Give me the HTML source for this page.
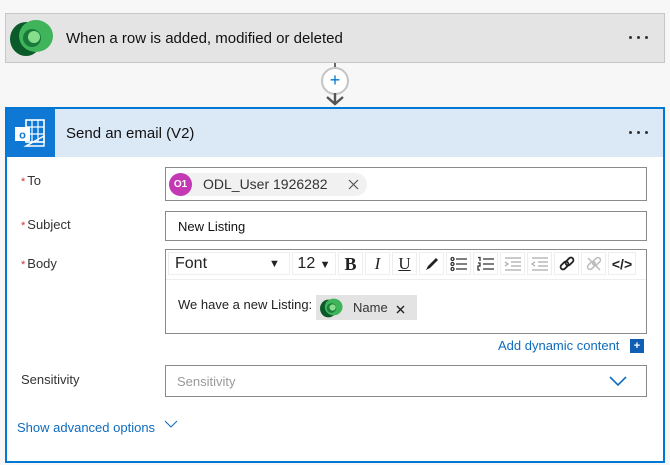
<!DOCTYPE html>
<html><head><style>
body{margin:0;width:670px;height:465px;background:#f7f7f7;font-family:"Liberation Sans",sans-serif;position:relative;overflow:hidden;color:#222}
.abs{position:absolute}
.lbl{position:absolute;left:21px;font-size:13px;color:#333}
.lbl b{color:#d13438;font-weight:normal;font-size:11px;margin-right:2px}
.inp{position:absolute;left:165px;width:482px;border:1px solid #8a8a8a;background:#fff;box-sizing:border-box}
.tb{position:absolute;top:2px;height:23px;background:#fff;border:1px solid #eee;box-sizing:border-box;font-size:14px;text-align:center;line-height:22px}
.dots{position:absolute;width:24px;height:4px}
.dots i{position:absolute;top:0;width:3px;height:3px;border-radius:50%;background:#333}
</style></head><body>
<div class="abs" style="left:5px;top:13px;width:660px;height:50px;background:#e4e4e4;border:1px solid #c6c6c6;box-sizing:border-box"></div>
<svg class="abs" style="left:6px;top:17px" width="48" height="42" viewBox="0 0 48 42">
<ellipse cx="20" cy="22" rx="16" ry="17" fill="#0b5a2a"/><ellipse cx="30" cy="19" rx="17" ry="16" fill="#3fb45a"/><circle cx="26" cy="21" r="9" fill="#1a7a3a"/><circle cx="28" cy="20" r="6" fill="#86de8c"/></svg>
<div class="abs" style="left:66px;top:30px;font-size:15px;color:#111">When a row is added, modified or deleted</div>
<div class="dots" style="left:629px;top:36px"><i style="left:0"></i><i style="left:8px"></i><i style="left:16px"></i></div>
<div class="abs" style="left:334px;top:63px;width:2px;height:6px;background:#666"></div>
<div class="abs" style="left:321px;top:67px;width:24px;height:24px;border:2px solid #c4c4c4;border-radius:50%;background:#fff;color:#0078d4;text-align:center;line-height:23px;font-size:18px">+</div>
<svg class="abs" style="left:325px;top:93px" width="20" height="13"><path d="M10 0V10M2 4L10 11L18 4" stroke="#555" stroke-width="2.4" fill="none"/></svg>
<div class="abs" style="left:5px;top:107px;width:660px;height:356px;border:2px solid #0078d4;box-sizing:border-box;background:#fff"></div>
<div class="abs" style="left:7px;top:109px;width:656px;height:48px;background:#dbe9f7"></div>
<div class="abs" style="left:7px;top:109px;width:48px;height:48px;background:#0f78d4"></div>
<svg class="abs" style="left:14px;top:119px" width="32" height="28" viewBox="0 0 32 28"><rect x="12" y="1" width="18" height="22" fill="none" stroke="#fff" stroke-width="1.6"/><path d="M12 8H30M12 15H30M18 1V23M24 1V23" stroke="#fff" stroke-width="1.2"/><path d="M12 27L30 17V27Z" fill="none" stroke="#fff" stroke-width="1.4"/><rect x="1" y="8" width="15" height="14" fill="#fff"/><text x="8.5" y="19.5" font-size="11" font-weight="bold" text-anchor="middle" fill="#0f78d4" font-family="Liberation Sans">o</text></svg>
<div class="abs" style="left:66px;top:125px;font-size:15px;color:#111">Send an email (V2)</div>
<div class="dots" style="left:629px;top:131px"><i style="left:0"></i><i style="left:8px"></i><i style="left:16px"></i></div>

<div class="lbl" style="top:173px"><b>*</b>To</div>
<div class="inp" style="top:167px;height:34px">
<div class="abs" style="left:3px;top:5px;width:198px;height:23px;border-radius:12px;background:#f1f1f1"></div>
<div class="abs" style="left:3px;top:5px;width:23px;height:23px;border-radius:50%;background:#c239b3;color:#fff;font-size:10px;font-weight:bold;text-align:center;line-height:23px">O1</div>
<div class="abs" style="left:37px;top:8px;font-size:14px;color:#333">ODL_User 1926282</div>
<svg class="abs" style="left:182px;top:11px" width="11" height="11"><path d="M1 1L10 10M10 1L1 10" stroke="#555" stroke-width="1.2"/></svg>
</div>
<div class="lbl" style="top:217px"><b>*</b>Subject</div>
<div class="inp" style="top:211px;height:30px"><div class="abs" style="left:12px;top:7px;font-size:13px;color:#111">New Listing</div></div>
<div class="lbl" style="top:256px"><b>*</b>Body</div>
<div class="inp" style="top:249px;height:85px;background:#fff">
<div class="abs" style="left:0;top:0;width:480px;height:29px;border-bottom:1px solid #eee"></div>
<div class="tb" style="left:2px;width:122px;text-align:left;padding-left:6px;font-size:16px">Font<span style="position:absolute;left:100px;font-size:11px">▼</span></div>
<div class="tb" style="left:126px;width:44px;font-size:16px">12 <span style="font-size:11px">▼</span></div>
<div class="tb" style="left:172px;width:25px;font-weight:bold;font-family:'Liberation Serif';font-size:18px">B</div>
<div class="tb" style="left:199px;width:25px;font-style:italic;font-family:'Liberation Serif';font-size:17px">I</div>
<div class="tb" style="left:226px;width:25px;text-decoration:underline;font-family:'Liberation Serif';font-size:17px">U</div>
<div class="tb" style="left:253px;width:25px"><svg width="16" height="16" style="margin-top:3px"><path d="M2 14L4 10L12 2L14 4L6 12Z" fill="#222"/></svg></div>
<div class="tb" style="left:280px;width:25px"><svg width="18" height="16" style="margin-top:3px"><g stroke="#333" stroke-width="1.3" fill="none"><circle cx="2.5" cy="3" r="1.5"/><circle cx="2.5" cy="8" r="1.5"/><circle cx="2.5" cy="13" r="1.5"/><path d="M6 3H17M6 8H17M6 13H17"/></g></svg></div>
<div class="tb" style="left:307px;width:25px"><svg width="18" height="16" style="margin-top:3px"><g stroke="#333" stroke-width="1.3" fill="none"><path d="M1 1.5H3V5M1 7H3V10H1V14H3M6 3H17M6 8H17M6 13H17"/></g></svg></div>
<div class="tb" style="left:334px;width:25px"><svg width="18" height="16" style="margin-top:3px"><g stroke="#aaa" stroke-width="1.2" fill="none"><path d="M1 2H17M7 6H17M7 10H17M1 14H17M1 6L4 8L1 10"/></g></svg></div>
<div class="tb" style="left:361px;width:25px"><svg width="18" height="16" style="margin-top:3px"><g stroke="#aaa" stroke-width="1.2" fill="none"><path d="M1 2H17M7 6H17M7 10H17M1 14H17M4 6L1 8L4 10"/></g></svg></div>
<div class="tb" style="left:388px;width:25px"><svg width="16" height="16" style="margin-top:3px"><g stroke="#222" stroke-width="1.8" fill="none"><rect x="1" y="7" width="9" height="5" rx="2.5" transform="rotate(-45 5.5 9.5)"/><rect x="6" y="3" width="9" height="5" rx="2.5" transform="rotate(-45 10.5 5.5)"/></g></svg></div>
<div class="tb" style="left:415px;width:25px"><svg width="16" height="16" style="margin-top:3px"><g stroke="#bbb" stroke-width="1.5" fill="none"><rect x="1" y="7" width="9" height="5" rx="2.5" transform="rotate(-45 5.5 9.5)"/><rect x="6" y="3" width="9" height="5" rx="2.5" transform="rotate(-45 10.5 5.5)"/><path d="M2 2L14 14"/></g></svg></div>
<div class="tb" style="left:442px;width:28px;font-weight:bold">&lt;/&gt;</div>
<div class="abs" style="left:12px;top:47px;font-size:13px;color:#222">We have a new Listing:</div>
<div class="abs" style="left:150px;top:45px;width:101px;height:25px;background:#e3e3e3"></div>
<svg class="abs" style="left:151px;top:47px" width="27" height="22" viewBox="0 0 48 42"><ellipse cx="20" cy="22" rx="16" ry="17" fill="#0b5a2a"/><ellipse cx="30" cy="19" rx="17" ry="16" fill="#3fb45a"/><circle cx="26" cy="21" r="9" fill="#1a7a3a"/><circle cx="28" cy="20" r="6" fill="#86de8c"/></svg>
<div class="abs" style="left:187px;top:50px;font-size:13px;color:#333">Name</div>
<svg class="abs" style="left:230px;top:55px" width="9" height="9"><path d="M1 1L8 8M8 1L1 8" stroke="#222" stroke-width="1.4"/></svg>
</div>
<div class="abs" style="left:498px;top:338px;font-size:13px;color:#0f6cbd">Add dynamic content</div>
<div class="abs" style="left:630px;top:339px;width:14px;height:14px;background:#0f5fb5;color:#fff;font-size:11px;text-align:center;line-height:14px;font-weight:bold">+</div>
<div class="lbl" style="top:372px">Sensitivity</div>
<div class="inp" style="top:365px;height:32px"><div class="abs" style="left:11px;top:8px;font-size:13px;color:#999">Sensitivity</div>
<svg class="abs" style="left:442px;top:9px" width="20" height="12"><path d="M2 2L10 10L18 2" stroke="#0f6cbd" stroke-width="1.6" fill="none"/></svg></div>
<div class="abs" style="left:17px;top:420px;font-size:13px;color:#0f6cbd">Show advanced options</div>
<svg class="abs" style="left:164px;top:420px" width="14" height="9"><path d="M1 1L7 7L13 1" stroke="#0f6cbd" stroke-width="1" fill="none"/></svg>
</body></html>
